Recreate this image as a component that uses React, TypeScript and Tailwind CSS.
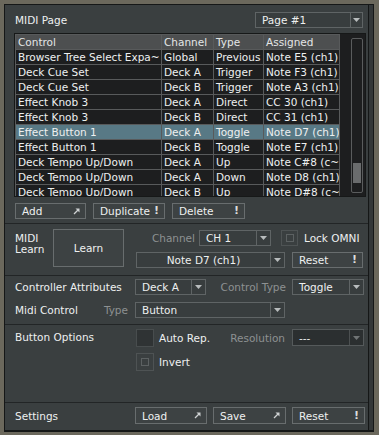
import React from 'react'

const rows: [string, string, string, string][] = [
  ['Browser Tree Select Expa~', 'Global', 'Previous', 'Note E5 (ch1)'],
  ['Deck Cue Set',        'Deck A', 'Trigger', 'Note F3 (ch1)'],
  ['Deck Cue Set',        'Deck B', 'Trigger', 'Note A3 (ch1)'],
  ['Effect Knob 3',       'Deck A', 'Direct',  'CC 30 (ch1)'],
  ['Effect Knob 3',       'Deck B', 'Direct',  'CC 31 (ch1)'],
  ['Effect Button 1',     'Deck A', 'Toggle',  'Note D7 (ch1)'],
  ['Effect Button 1',     'Deck B', 'Toggle',  'Note E7 (ch1)'],
  ['Deck Tempo Up/Down',  'Deck A', 'Up',      'Note C#8 (c~'],
  ['Deck Tempo Up/Down',  'Deck A', 'Down',    'Note D8 (ch1)'],
  ['Deck Tempo Up/Down',  'Deck B', 'Up',      'Note D#8 (c~'],
]
const SELECTED = 5

function ArrowIcon() {
  return (
    <svg width="7" height="7" viewBox="0 0 7 7">
      <path d="M2.5 0.5 H6.5 V4.5 Z" fill="#cfd2d3" />
      <path d="M1 6 L5 2" stroke="#cfd2d3" strokeWidth="1.3" />
    </svg>
  )
}

function Caret({ dim }: { dim?: boolean }) {
  return (
    <svg width="7" height="4" viewBox="0 0 7 4">
      <path d="M0 0 H7 L3.5 4 Z" fill={dim ? '#707475' : '#b8bcbd'} />
    </svg>
  )
}

function Btn({ label, icon, className = '' }: { label: string; icon?: 'arrow' | 'bang'; className?: string }) {
  return (
    <div className={`h-[16px] border border-[#686d6e] bg-[#3d4243] flex items-center justify-between pl-[6px] pr-[5px] ${className}`}>
      <span>{label}</span>
      {icon === 'arrow' && <ArrowIcon />}
      {icon === 'bang' && <span className="font-bold text-[11px] text-[#dcdede]">!</span>}
    </div>
  )
}

function Drop({ value, className = '', center, dim, arrowW = 'w-[14px]' }: {
  value: string; className?: string; center?: boolean; dim?: boolean; arrowW?: string
}) {
  return (
    <div className={`h-[16px] border flex items-stretch ${dim ? 'border-[#555a5b] bg-[#2b2f30]' : 'border-[#5f6465] bg-[#383d3e]'} ${className}`}>
      <span className={`flex-1 flex items-center overflow-hidden whitespace-nowrap ${center ? 'justify-center' : 'pl-[6px]'}`}>{value}</span>
      <span className={`${arrowW} border-l ${dim ? 'border-[#4c5051]' : 'border-[#5f6465]'} flex items-center justify-center`}>
        <Caret dim={dim} />
      </span>
    </div>
  )
}

function Check({ inner, filled, className = '' }: { inner?: boolean; filled?: boolean; className?: string }) {
  return (
    <div className={`border border-[#62676880] flex items-center justify-center ${filled ? 'bg-[#2f3334] border-[#5f6465]' : 'bg-[#3a3f40] border-[#686d6e]'} ${className}`}>
      {inner && <div className="w-[8px] h-[8px] border border-[#5c6162]" />}
    </div>
  )
}

const Sep = () => <div className="h-px bg-[#222526]" />

export default function App() {
  return (
    <div className="w-[379px] h-[435px] bg-[#6b685c] pt-[4px] pl-[4px] pr-[5px] pb-[3px] font-['DejaVu_Sans',sans-serif] text-[10.5px] leading-[14px] text-[#eef0f0]">
      <div className="h-full flex border border-b-2 border-[#151717]">
        <div className="flex-1 flex flex-col bg-[#3a3f40]">

          {/* MIDI Page */}
          <div className="mt-[7px] h-[16px] flex items-center justify-between pl-[10px] pr-[5px]">
            <span>MIDI Page</span>
            <Drop value="Page #1" className="w-[108px]" arrowW="w-[12px]" />
          </div>

          <div className="mt-[5px] ml-[9px] mr-[2px] h-[164px] border border-[#161818] bg-[#1d1e1f] flex overflow-hidden">
            <div className="w-[325px] shrink-0 self-start border-l border-t border-[#585a5b]">
              <div className="h-[15px] flex border-b border-[#585a5b] bg-[#4d4f50] text-[#e4e6e6]">
                {['Control', 'Channel', 'Type', 'Assigned'].map((h, i) => (
                  <div key={h} className={`${['w-[146px]', 'w-[52px]', 'w-[50px]', 'w-[76px]'][i]} border-r border-[#585a5b] pl-[2px] flex items-center overflow-hidden whitespace-nowrap`}>{h}</div>
                ))}
              </div>
              {rows.map((r, ri) => (
                <div key={ri} className={`h-[15px] flex border-b border-[#585a5b] ${ri === SELECTED ? 'bg-[#587985]' : ''}`}>
                  {r.map((c, i) => (
                    <div key={i} className={`${['w-[146px]', 'w-[52px]', 'w-[50px]', 'w-[76px]'][i]} border-r border-[#585a5b] pl-[2px] flex items-center overflow-hidden whitespace-nowrap`}>{c}</div>
                  ))}
                </div>
              ))}
            </div>
            <div className="flex-1 pl-[11px] pt-[4px]">
              <div className="w-[12px] h-[155px] border border-[#5a5c5d] rounded-[2px] px-[1px] pt-[124px]">
                <div className="h-[20px] bg-[#6a6c6d]" />
              </div>
            </div>
          </div>

          <div className="mt-[6px] pl-[10px] flex gap-[7px]">
            <Btn label="Add" icon="arrow" className="w-[71px]" />
            <Btn label="Duplicate" icon="bang" className="w-[72px]" />
            <Btn label="Delete" icon="bang" className="w-[73px]" />
          </div>

          <div className="mt-[4px]"><Sep /></div>

          {/* MIDI Learn */}
          <div className="mt-[5px] flex items-start">
            <div className="w-[38px] ml-[10px] pt-[4px] leading-[11px]">MIDI<br />Learn</div>
            <div className="w-[71px] h-[38px] border border-[#686d6e] bg-[#3d4243] flex items-center justify-center">Learn</div>
            <div className="ml-[12px] flex flex-col">
              <div className="mt-[1px] h-[16px] flex items-center">
                <span className="w-[63px] text-right pr-[4px] text-[#8d9192]">Channel</span>
                <Drop value="CH 1" className="w-[72px]" />
                <Check inner className="ml-[10px] w-[17px] h-[16px]" />
                <span className="ml-[6px]">Lock OMNI</span>
              </div>
              <div className="mt-[6px] flex">
                <Drop value="Note D7 (ch1)" center className="w-[149px]" />
                <Btn label="Reset" icon="bang" className="ml-[7px] w-[71px]" />
              </div>
            </div>
          </div>

          <div className="mt-[7px]"><Sep /></div>

          {/* Controller attributes */}
          <div className="mt-[3px] h-[16px] flex items-center">
            <span className="w-[130px] pl-[10px]">Controller Attributes</span>
            <Drop value="Deck A" className="w-[71px]" />
            <span className="w-[86px] text-right pr-[6px] text-[#8d9192]">Control Type</span>
            <Drop value="Toggle" className="w-[72px]" />
          </div>
          <div className="mt-[7px] h-[16px] flex items-center">
            <span className="w-[130px] pl-[10px] pr-[7px] flex justify-between">
              <span>Midi Control</span>
              <span className="text-[#8d9192]">Type</span>
            </span>
            <Drop value="Button" className="w-[150px]" />
          </div>

          <div className="mt-[6px]"><Sep /></div>

          {/* Button options */}
          <div className="mt-[4px] flex items-start">
            <span className="w-[131px] pl-[10px] pt-[1px]">Button Options</span>
            <Check filled className="w-[18px] h-[18px]" />
            <div className="w-[138px] h-[18px] pl-[5px] pr-[7px] flex items-center justify-between">
              <span>Auto Rep.</span>
              <span className="text-[#8d9192]">Resolution</span>
            </div>
            <Drop value="---" dim className="w-[72px] h-[17px]" />
          </div>
          <div className="mt-[6px] ml-[131px] flex items-center">
            <Check inner className="w-[18px] h-[18px]" />
            <span className="ml-[5px]">Invert</span>
          </div>

          <div className="flex-1" />
          <Sep />

          {/* Settings */}
          <div className="mt-[4px] mb-[6px] h-[17px] flex items-center">
            <span className="w-[130px] pl-[10px]">Settings</span>
            <Btn label="Load" icon="arrow" className="w-[72px] h-[17px]" />
            <Btn label="Save" icon="arrow" className="ml-[6px] w-[73px] h-[17px]" />
            <Btn label="Reset" icon="bang" className="ml-[6px] w-[73px] h-[17px]" />
          </div>
        </div>
        <div className="w-[5px] border-l border-[#151717] bg-[#333738]" />
      </div>
    </div>
  )
}
